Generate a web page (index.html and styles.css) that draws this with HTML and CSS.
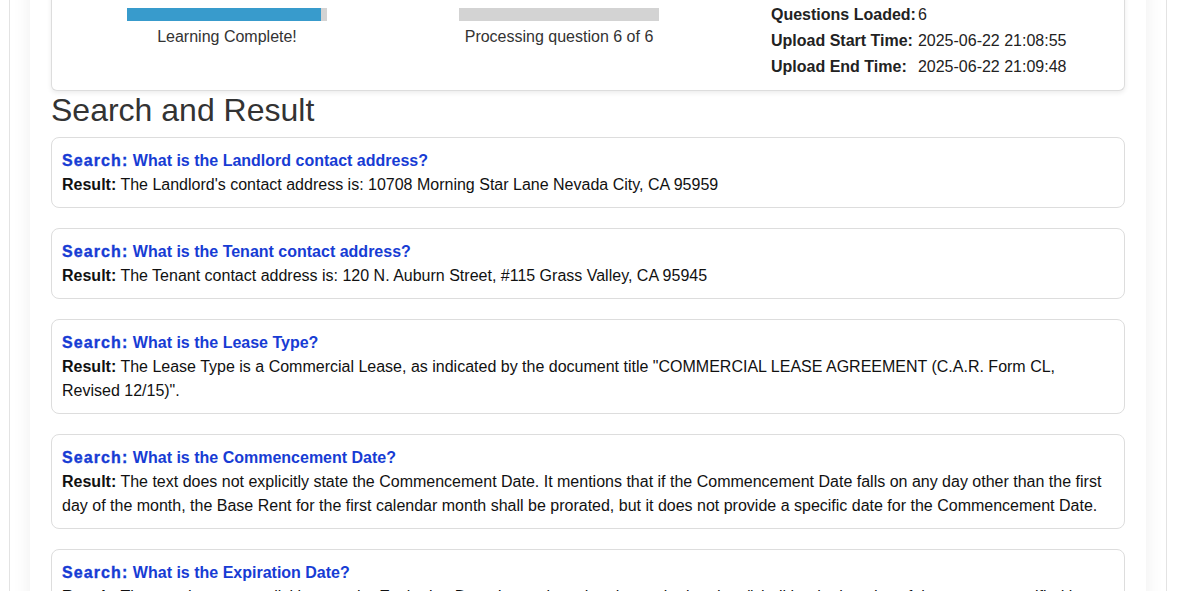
FILE: index.html
```html
<!DOCTYPE html>
<html lang="en">
<head>
<meta charset="utf-8">
<title>Search and Result</title>
<link rel="stylesheet" href="styles.css">
</head>
<body>
<div class="outer">
  <div class="container">
    <section class="summary">
      <div class="progress-col col-learn">
        <div class="bar"><div class="fill" style="width: 97%"></div></div>
        <div class="bar-label">Learning Complete!</div>
      </div>
      <div class="progress-col col-process">
        <div class="bar"><div class="fill" style="width: 0%"></div></div>
        <div class="bar-label">Processing question 6 of 6</div>
      </div>
      <table class="stats">
        <tr><th>Questions Loaded:</th><td>6</td></tr>
        <tr><th>Upload Start Time:</th><td>2025-06-22 21:08:55</td></tr>
        <tr><th>Upload End Time:</th><td>2025-06-22 21:09:48</td></tr>
      </table>
    </section>

    <h2 class="section-title">Search and Result</h2>

    <div class="result-card">
      <div class="search"><span class="lbl">Search:</span> What is the Landlord contact address?</div>
      <div class="result"><b>Result:</b> The Landlord's contact address is: 10708 Morning Star Lane Nevada City, CA 95959</div>
    </div>

    <div class="result-card">
      <div class="search"><span class="lbl">Search:</span> What is the Tenant contact address?</div>
      <div class="result"><b>Result:</b> The Tenant contact address is: 120 N. Auburn Street, #115 Grass Valley, CA 95945</div>
    </div>

    <div class="result-card">
      <div class="search"><span class="lbl">Search:</span> What is the Lease Type?</div>
      <div class="result"><b>Result:</b> The Lease Type is a Commercial Lease, as indicated by the document title "COMMERCIAL LEASE AGREEMENT (C.A.R. Form CL, Revised 12/15)".</div>
    </div>

    <div class="result-card">
      <div class="search"><span class="lbl">Search:</span> What is the Commencement Date?</div>
      <div class="result"><b>Result:</b> The text does not explicitly state the Commencement Date. It mentions that if the Commencement Date falls on any day other than the first day of the month, the Base Rent for the first calendar month shall be prorated, but it does not provide a specific date for the Commencement Date.</div>
    </div>

    <div class="result-card">
      <div class="search"><span class="lbl">Search:</span> What is the Expiration Date?</div>
      <div class="result"><b>Result:</b> The text does not explicitly state the Expiration Date. It mentions that the expiration date "shall be the last day of the term as specified in paragraph 2, but it does not provide a specific date.</div>
    </div>
  </div>
</div>
</body>
</html>
```

FILE: styles.css
```css
html, body {
  margin: 0;
  padding: 0;
  background: #ffffff;
}

body {
  font-family: "Liberation Sans", Arial, sans-serif;
  font-size: 16px;
  color: #222;
  padding: 0 11px 0 9px;
  overflow: hidden;
}

.outer {
  border-left: 1px solid #e3e3e3;
  border-right: 1px solid #e3e3e3;
  min-height: 100vh;
  padding: 0 20px;
}

.container {
  background: #fff;
  box-shadow: 0 0 18px rgba(0, 0, 0, 0.07);
  padding: 0 21px 30px;
  min-height: 100vh;
}

.summary {
  display: flex;
  align-items: flex-start;
  margin-top: -20px;
  padding: 20px 0 10px 75px;
  border: 1px solid #ddd;
  border-top: none;
  border-radius: 0 0 6px 6px;
  box-shadow: 0 2px 5px rgba(0, 0, 0, 0.08);
  background: #fff;
}

.progress-col {
  width: 200px;
  display: flex;
  flex-direction: column;
  align-items: center;
  padding-top: 8px;
}

.col-learn {
  margin-right: 132px;
}

.col-process {
  margin-right: 111px;
}

.bar {
  width: 200px;
  height: 13px;
  background: #d3d3d3;
}

.fill {
  height: 100%;
  background: #389bcc;
}

.bar-label {
  margin-top: 4px;
  line-height: 24px;
  color: #333;
  white-space: nowrap;
}

.stats {
  border-collapse: collapse;
  margin-top: 2px;
  color: #222;
}

.stats th,
.stats td {
  padding: 1px;
  line-height: 24px;
  text-align: left;
  white-space: nowrap;
  vertical-align: middle;
}

.stats th {
  font-weight: bold;
  padding-right: 1px;
}

.section-title {
  font-size: 32px;
  font-weight: normal;
  line-height: 36px;
  margin: 1px 0 9px;
  color: #333;
}

.result-card {
  border: 1px solid #ddd;
  border-radius: 8px;
  padding: 10px;
  margin-bottom: 20px;
  line-height: 24px;
  color: #111;
}

.search {
  color: #173cd4;
  font-weight: bold;
  line-height: 25px;
}

.search .lbl {
  color: #173cd4;
  letter-spacing: 1.1px;
  -webkit-text-stroke: 0.35px #173cd4;
}

.result b {
  font-weight: bold;
}
```
